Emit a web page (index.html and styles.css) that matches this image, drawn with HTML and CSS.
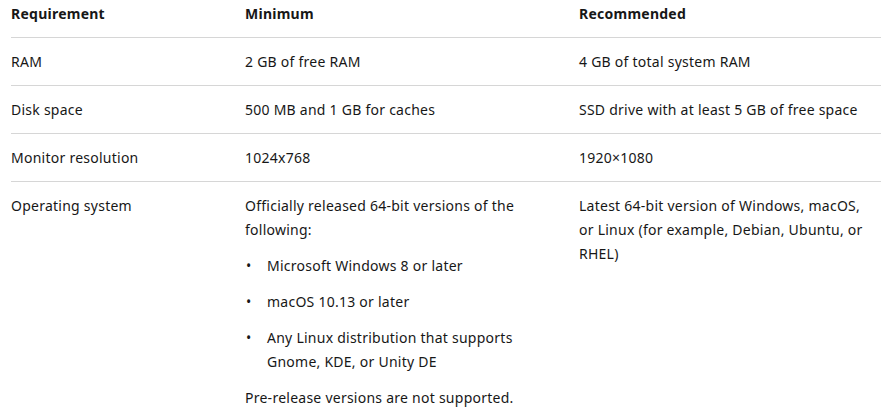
FILE: index.html
```html
<!DOCTYPE html>
<html lang="en">
<head>
<meta charset="utf-8">
<title>System requirements</title>
<link rel="stylesheet" href="styles.css">
</head>
<body>
<table class="req">
  <colgroup>
    <col class="c1"><col class="c2"><col class="c3">
  </colgroup>
  <thead>
    <tr><th>Requirement</th><th>Minimum</th><th>Recommended</th></tr>
  </thead>
  <tbody>
    <tr><td>RAM</td><td>2 GB of free RAM</td><td>4 GB of total system RAM</td></tr>
    <tr><td>Disk space</td><td>500 MB and 1 GB for caches</td><td>SSD drive with at least 5 GB of free space</td></tr>
    <tr><td>Monitor resolution</td><td>1024x768</td><td>1920×1080</td></tr>
    <tr class="last">
      <td>Operating system</td>
      <td>
        <p class="para">Officially released 64-bit versions of the following:</p>
        <ul class="list">
          <li>Microsoft Windows 8 or later</li>
          <li>macOS 10.13 or later</li>
          <li>Any Linux distribution that supports Gnome, KDE, or Unity DE</li>
        </ul>
        <p class="para">Pre-release versions are not supported.</p>
      </td>
      <td>Latest 64-bit version of Windows, macOS, or Linux (for example, Debian, Ubuntu, or RHEL)</td>
    </tr>
  </tbody>
</table>
</body>
</html>
```
FILE: styles.css
```css
html, body {
  margin: 0;
  padding: 0;
  background: #ffffff;
}
body {
  font-family: "Noto Sans", "Noto Sans CJK KR", sans-serif;
  font-size: 14px;
  line-height: 24px;
  letter-spacing: 0.25px;
  color: #171717;
}
.req {
  margin-left: 11px;
  width: 870px;
  border-collapse: collapse;
  table-layout: fixed;
}
.c1 { width: 234px; }
.c2 { width: 334px; }
.c3 { width: 302px; }
.req th {
  text-align: left;
  font-weight: 700;
  padding: 2px 20px 11px 0;
  border-bottom: 1px solid #d6d6d6;
  vertical-align: top;
}
.req td {
  padding: 12px 14px 11px 0;
  border-bottom: 1px solid #d6d6d6;
  vertical-align: top;
}
.req tr.last td {
  border-bottom: none;
}
.para {
  margin: 0;
}
.list {
  list-style: none;
  margin: 12px 0;
  padding: 0;
}
.list li {
  display: flex;
}
.list li + li {
  margin-top: 12px;
}
.list li::before {
  content: "•";
  flex: 0 0 22px;
  padding-left: 1px;
  box-sizing: border-box;
}
```
